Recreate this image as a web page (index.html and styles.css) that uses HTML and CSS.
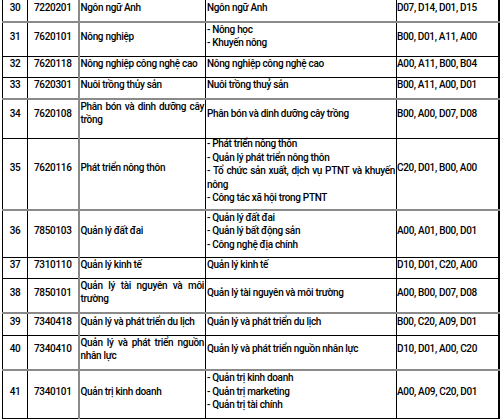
FILE: index.html
```html
<!DOCTYPE html>
<html lang="vi">
<head>
<meta charset="utf-8">
<link rel="stylesheet" href="styles.css">
</head>
<body>
<table class="tbl">
  <colgroup>
    <col class="c1"><col class="c2"><col class="c3"><col class="c4"><col class="c5">
  </colgroup>
  <tr class="h22 bg">
    <td class="num">30</td><td class="code">7220201</td><td class="name">Ngôn ngữ Anh</td><td class="spec">Ngôn ngữ Anh</td><td class="grp">D07, D14, D01, D15</td>
  </tr>
  <tr class="h35">
    <td class="num">31</td><td class="code">7620101</td><td class="name">Nông nghiệp</td><td class="spec"><div>- Nông học</div><div>- Khuyến nông</div></td><td class="grp">B00, D01, A11, A00</td>
  </tr>
  <tr class="h21">
    <td class="num">32</td><td class="code">7620118</td><td class="name">Nông nghiệp công nghệ cao</td><td class="spec">Nông nghiệp công nghệ cao</td><td class="grp">A00, A11, B00, B04</td>
  </tr>
  <tr class="h21 bg">
    <td class="num">33</td><td class="code">7620301</td><td class="name">Nuôi trồng thủy sản</td><td class="spec">Nuôi trồng thuỷ sản</td><td class="grp">B00, A11, A00, D01</td>
  </tr>
  <tr class="h40 tall">
    <td class="num">34</td><td class="code">7620108</td><td class="name">Phân bón và dinh dưỡng cây trồng</td><td class="spec">Phân bón và dinh dưỡng cây trồng</td><td class="grp">B00, A00, D07, D08</td>
  </tr>
  <tr class="h71 bg full">
    <td class="num">35</td><td class="code">7620116</td><td class="name">Phát triển nông thôn</td><td class="spec"><div>- Phát triển nông thôn</div><div>- Quản lý phát triển nông thôn</div><div>- Tổ chức sản xuất, dịch vụ PTNT và khuyến nông</div><div>- Công tác xã hội trong PTNT</div></td><td class="grp">C20, D01, B00, A00</td>
  </tr>
  <tr class="h48">
    <td class="num">36</td><td class="code">7850103</td><td class="name">Quản lý đất đai</td><td class="spec"><div>- Quản lý đất đai</div><div>- Quản lý bất động sản</div><div>- Công nghệ địa chính</div></td><td class="grp">A00, A01, B00, D01</td>
  </tr>
  <tr class="h20">
    <td class="num">37</td><td class="code">7310110</td><td class="name">Quản lý kinh tế</td><td class="spec">Quản lý kinh tế</td><td class="grp">D10, D01, C20, A00</td>
  </tr>
  <tr class="h35 bg">
    <td class="num">38</td><td class="code">7850101</td><td class="name">Quản lý tài nguyên và môi trường</td><td class="spec">Quản lý tài nguyên và môi trường</td><td class="grp">A00, B00, D07, D08</td>
  </tr>
  <tr class="h22">
    <td class="num">39</td><td class="code">7340418</td><td class="name">Quản lý và phát triển du lịch</td><td class="spec">Quản lý và phát triển du lịch</td><td class="grp">B00, C20, A09, D01</td>
  </tr>
  <tr class="h34 bg">
    <td class="num">40</td><td class="code">7340410</td><td class="name">Quản lý và phát triển nguồn nhân lực</td><td class="spec">Quản lý và phát triển nguồn nhân lực</td><td class="grp">D10, D01, A00, C20</td>
  </tr>
  <tr class="h49">
    <td class="num">41</td><td class="code">7340101</td><td class="name">Quản trị kinh doanh</td><td class="spec"><div>- Quản trị kinh doanh</div><div>- Quản trị marketing</div><div>- Quản trị tài chính</div></td><td class="grp">A00, A09, C20, D01</td>
  </tr>
</table>
</body>
</html>
```

FILE: styles.css
```css
html, body {
  margin: 0;
  padding: 0;
  background: #fff;
}

.tbl {
  margin: -1px 0 0 2px;
  border-collapse: collapse;
  table-layout: fixed;
  width: 496px;
  font-family: Roboto, "Liberation Sans", sans-serif;
  font-size: 10px;
  font-weight: 500;
  letter-spacing: -0.32px;
  line-height: 13.5px;
  color: #000;
}

.c1 { width: 25px; }
.c2 { width: 51px; }
.c3 { width: 127px; }
.c4 { width: 191px; }
.c5 { width: 102px; }

.tbl td {
  border: 1px solid #000;
  padding: 0 1px 6px 1px;
  vertical-align: middle;
  text-align: justify;
}

.tbl tr.bg td {
  border-bottom: 2px solid #8a8a8a;
}

.tbl td.code {
  border-right: 2px solid #8a8a8a;
}

.tbl td.num,
.tbl td.code {
  text-align: center;
}

.tbl td.grp {
  text-align: left;
  padding-left: 0;
  border-right-width: 2px;
}

.tbl tr.tall td {
  padding-bottom: 11px;
}

.tbl tr.full td {
  padding-bottom: 13px;
}

.tbl tr.full td.spec {
  vertical-align: top;
  padding-bottom: 0;
}

.tbl tr.full td.spec div:first-child {
  margin-top: -2px;
}

.h20 { height: 20px; }
.h21 { height: 21px; }
.h22 { height: 22px; }
.h34 { height: 34px; }
.h35 { height: 35px; }
.h40 { height: 40px; }
.h48 { height: 48px; }
.h49 { height: 49px; }
.h71 { height: 71px; }
```
